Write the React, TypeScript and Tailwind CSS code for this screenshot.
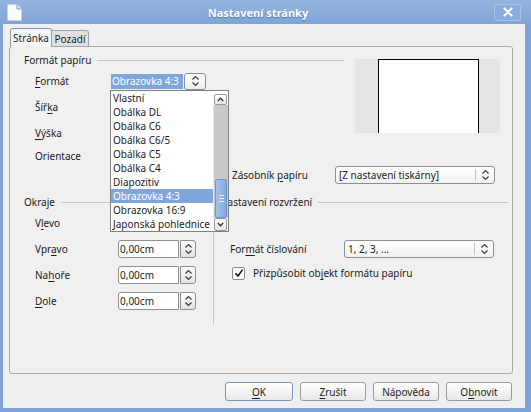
import React from 'react'

const U = ({ children }: { children: React.ReactNode }) => (
  <span className="underline underline-offset-[2px] decoration-[1px]">{children}</span>
)

function Chevrons({ className = '' }: { className?: string }) {
  return (
    <svg width="9" height="12" viewBox="0 0 9 12" className={className} fill="none" stroke="#3a3a3a" strokeWidth="1.2">
      <path d="M1.5 4.5 L4.5 1.5 L7.5 4.5" />
      <path d="M1.5 7.5 L4.5 10.5 L7.5 7.5" />
    </svg>
  )
}

function DocIcon() {
  return (
    <svg width="15" height="17" viewBox="0 0 15 17" className="ml-[7px]">
      <path d="M0.5 0.5 H10 L14.5 5 V16.5 H0.5 Z" fill="#fbfbfb" stroke="#c9d3df" />
      <path d="M10 0.5 V5 H14.5" fill="#dfe5ec" stroke="#8a9aae" />
    </svg>
  )
}

function SpinField({ value }: { value: string }) {
  return (
    <div className="flex h-[18px] gap-[1px]">
      <div className="w-[61px] h-full bg-white border border-[#8f8f8f] rounded-l-[3px] pl-[1px] flex items-center">{value}</div>
      <div className="w-[16px] h-full border border-[#8f8f8f] rounded-r-[3px] bg-gradient-to-b from-white to-[#e2e2e2] flex items-center justify-center">
        <Chevrons />
      </div>
    </div>
  )
}

function Combo({ value, w }: { value: string; w: string }) {
  return (
    <div className={w + ' h-[18px] flex items-center bg-gradient-to-b from-white to-[#f1f1f1] border border-[#8f8f8f] rounded-[3px]'}>
      <div className="flex-1 pl-[3px]">{value}</div>
      <div className="h-[12px] w-px bg-[#c4c4c4]" />
      <div className="w-[18px] flex justify-center">
        <Chevrons />
      </div>
    </div>
  )
}

function Header({ label, className = '' }: { label: React.ReactNode; className?: string }) {
  return (
    <div className={'flex items-center h-[12px] ' + className}>
      <span className="whitespace-nowrap">{label}</span>
      <div className="flex-1 h-px bg-[#c6c6c6] ml-[6px]" />
    </div>
  )
}

const listItems = [
  'Vlastní',
  'Obálka DL',
  'Obálka C6',
  'Obálka C6/5',
  'Obálka C5',
  'Obálka C4',
  'Diapozitiv',
  'Obrazovka 4:3',
  'Obrazovka 16:9',
  'Japonská pohlednice',
]

function DropList() {
  return (
    <div className="absolute z-20 left-[-1px] top-[17px] w-[119px] h-[142px] bg-white border border-[#7f7f7f] flex">
      <div className="flex-1 min-w-0">
        {listItems.map((it) => (
          <div
            key={it}
            className={
              'h-[14px] flex items-center pl-[2px] whitespace-nowrap overflow-hidden ' +
              (it === 'Obrazovka 4:3' ? 'bg-[#7fa6db] text-white' : '')
            }
          >
            {it}
          </div>
        ))}
      </div>
      <div className="w-[15px] flex flex-col bg-white">
        <div className="h-[3px]" />
        <div className="h-[11px] mx-[1px] border border-[#9a9a9a] rounded-[2px] bg-gradient-to-b from-white to-[#e4e4e4] flex items-center justify-center">
          <svg width="7" height="5" viewBox="0 0 7 5" fill="none" stroke="#333" strokeWidth="1.3">
            <path d="M0.8 4 L3.5 1.2 L6.2 4" />
          </svg>
        </div>
        <div className="flex-1 bg-[#c9c9c9] border-l border-[#e6e6e6] flex flex-col justify-end">
          <div className="h-[39px] mx-[1px] rounded-[2px] border border-[#6d95cd] bg-gradient-to-r from-[#a3c1e8] to-[#83a9dc] flex flex-col items-center justify-center gap-[2px]">
            <div className="w-[5px] h-px bg-[#e8f0fb]" />
            <div className="w-[5px] h-px bg-[#e8f0fb]" />
            <div className="w-[5px] h-px bg-[#e8f0fb]" />
          </div>
        </div>
        <div className="h-[13px] mx-[1px] border border-[#9a9a9a] rounded-[2px] bg-gradient-to-b from-white to-[#e4e4e4] flex items-center justify-center">
          <svg width="7" height="5" viewBox="0 0 7 5" fill="none" stroke="#333" strokeWidth="1.3">
            <path d="M0.8 1 L3.5 3.8 L6.2 1" />
          </svg>
        </div>
      </div>
    </div>
  )
}

function Button({ children, w, primary }: { children: React.ReactNode; w: string; primary?: boolean }) {
  return (
    <button
      className={
        w +
        ' h-[19px] rounded-[3px] border bg-gradient-to-b from-white to-[#e8e8e8] flex items-center justify-center ' +
        (primary ? 'border-[#7b93b7]' : 'border-[#9b9b9b]')
      }
    >
      {children}
    </button>
  )
}

const margins: [React.ReactNode, string, string][] = [
  [<>V<U>l</U>evo</>, 'vlevo', ''],
  [<>Vpr<U>a</U>vo</>, 'vpravo', '0,00cm'],
  [<>Na<U>h</U>oře</>, 'nahore', '0,00cm'],
  [<><U>D</U>ole</>, 'dole', '0,00cm'],
]

export default function App() {
  return (
    <div className="w-[531px] h-[412px] bg-[#7fa3d6] flex flex-col font-['Noto_Sans',sans-serif] text-[10px] leading-none text-[#1c1c1c] overflow-hidden">
      {/* title bar */}
      <div className="h-[24px] shrink-0 flex items-center bg-gradient-to-b from-[#95b5e0] to-[#80a4d6]">
        <DocIcon />
        <div className="flex-1 text-center text-white font-bold text-[11px] [text-shadow:0_1px_1px_rgba(40,70,120,0.5)]">
          Nastavení stránky
        </div>
        <div className="mr-[10px] w-[27px] h-[17px] border border-[#a9c2e5] bg-[#8aace0] rounded-[2px] flex items-center justify-center">
          <svg width="10" height="10" viewBox="0 0 10 10" stroke="white" strokeWidth="2.2" strokeLinecap="round">
            <path d="M1.5 1.5 L8.5 8.5 M8.5 1.5 L1.5 8.5" />
          </svg>
        </div>
      </div>

      {/* body */}
      <div className="flex-1 ml-[3px] mr-[6px] mb-[4px] bg-[#efefef] flex flex-col">
        {/* tabs */}
        <div className="flex items-end pl-[7px] pt-[4px] h-[23px] relative z-10 -mb-px">
          <div className="w-[42px] h-[19px] bg-[#f5f5f5] border border-[#9c9c9c] border-t-[#6f95c9] border-b-0 rounded-t-[3px] flex items-center justify-center">
            Stránka
          </div>
          <div className="w-[37px] h-[17px] bg-[#e1e1e1] border border-[#a5a5a5] border-l-0 rounded-tr-[3px] flex items-center justify-center">
            Pozadí
          </div>
        </div>

        {/* panel */}
        <div className="ml-[6px] w-[504px] h-[328px] border border-[#a9a9a9] rounded-[3px] bg-[#f0f0f0] pt-[7px] pl-[14px] pr-[4px]">
          {/* paper format */}
          <div className="flex items-start">
            <div className="w-[320px]">
              <Header label="Formát papíru" />
              <div className="mt-[2px]">
                <div className="h-[26px] flex items-center pl-[11px]">
                  <div className="w-[76px]">
                    <U>F</U>ormát
                  </div>
                  <div className="relative w-[96px] h-[17px] flex items-center">
                    <div className="w-[72px] h-[15px] bg-[#7fa6db] text-white flex items-center pl-[1px] overflow-hidden whitespace-nowrap">
                      Obrazovka 4:3
                    </div>
                    <div className="ml-[1px] w-[22px] h-[17px] border border-[#8f8f8f] rounded-[3px] bg-gradient-to-b from-white to-[#ececec] flex items-center justify-center">
                      <Chevrons />
                    </div>
                    <DropList />
                  </div>
                </div>
                <div className="h-[26px] flex items-center pl-[11px]">
                  Šíř<U>k</U>a
                </div>
                <div className="h-[26px] flex items-center pl-[11px]">
                  <U>V</U>ýška
                </div>
              </div>
            </div>
            <div className="ml-[11px] mt-[5px] w-[145px] h-[74px] bg-[#e5e5e5] pl-[23px]">
              <div className="w-[101px] h-full bg-white border-l border-r border-t border-black" />
            </div>
          </div>

          <div className="flex h-[38px]">
            <div className="w-[208px] pl-[11px]">
              <div className="h-[20px] flex items-center">Orientace</div>
            </div>
            <div className="self-end h-[19px] flex items-center">
              <div className="w-[103px]">
                Zásobník <U>p</U>apíru
              </div>
              <Combo value="[Z nastavení tiskárny]" w="w-[160px]" />
            </div>
          </div>

          {/* margins + layout */}
          <div className="flex mt-[12px]">
            <div className="w-[189px]">
              <Header label="Okraje" className="pr-[6px]" />
              <div className="mt-[2px]">
                {margins.map(([label, key, value]) => (
                  <div key={key} className="h-[26px] flex items-center pl-[11px]">
                    <div className="w-[83px]">{label}</div>
                    <SpinField value={value} />
                  </div>
                ))}
              </div>
            </div>
            <div className="w-px bg-[#c6c6c6] mt-[13px] h-[115px]" />
            <div className="flex-1 pl-[6px]">
              <Header label="Nastavení rozvržení" />
              <div className="mt-[2px]">
                <div className="h-[26px]" />
                <div className="h-[26px] flex items-center pl-[10px]">
                  <div className="w-[114px]">
                    For<U>m</U>át číslování
                  </div>
                  <Combo value="1, 2, 3, ..." w="w-[150px]" />
                </div>
                <div className="h-[22px] flex items-center pl-[12px]">
                  <div className="w-[13px] h-[13px] bg-white border border-[#8a8a8a] rounded-[2px] flex items-center justify-center">
                    <svg width="10" height="10" viewBox="0 0 10 10" fill="none" stroke="#111" strokeWidth="1.6">
                      <path d="M1.5 5.2 L4 8 L8.6 1.6" />
                    </svg>
                  </div>
                  <div className="ml-[8px]">
                    Přizpůsobit ob<U>j</U>ekt formátu papíru
                  </div>
                </div>
              </div>
            </div>
          </div>
        </div>

        {/* buttons */}
        <div className="flex justify-end gap-[7px] pr-[13px] pt-[8px]">
          <Button w="w-[68px]" primary>
            <U>O</U>K
          </Button>
          <Button w="w-[66px]">
            <U>Z</U>rušit
          </Button>
          <Button w="w-[66px]">Nápověda</Button>
          <Button w="w-[66px]">
            O<U>b</U>novit
          </Button>
        </div>
      </div>
    </div>
  )
}
